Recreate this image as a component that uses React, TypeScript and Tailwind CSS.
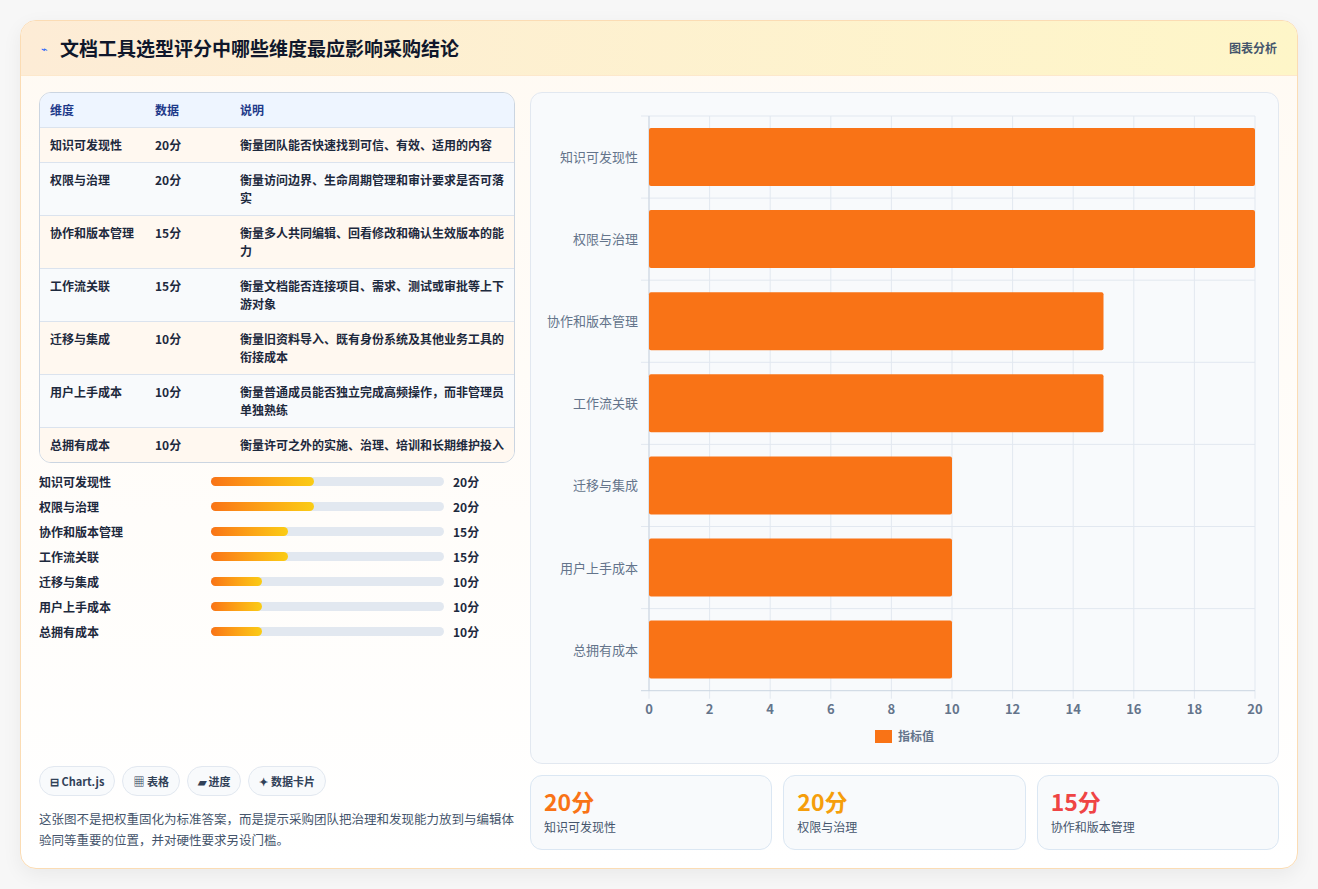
const rows = [
  { name: '知识可发现性', v: 20, desc: '衡量团队能否快速找到可信、有效、适用的内容' },
  { name: '权限与治理', v: 20, desc: '衡量访问边界、生命周期管理和审计要求是否可落实' },
  { name: '协作和版本管理', v: 15, desc: '衡量多人共同编辑、回看修改和确认生效版本的能力' },
  { name: '工作流关联', v: 15, desc: '衡量文档能否连接项目、需求、测试或审批等上下游对象' },
  { name: '迁移与集成', v: 10, desc: '衡量旧资料导入、既有身份系统及其他业务工具的衔接成本' },
  { name: '用户上手成本', v: 10, desc: '衡量普通成员能否独立完成高频操作，而非管理员单独熟练' },
  { name: '总拥有成本', v: 10, desc: '衡量许可之外的实施、治理、培训和长期维护投入' },
];

const font = { fontFamily: '"Noto Sans CJK SC", "Liberation Sans", sans-serif' };

const Chart = () => {
  const x0 = 118;
  const w = 606;
  const top = 23;
  const rh = 82.1;
  const bottom = top + rh * 7;
  return (
    <svg width="747" height="672" className="block">
      {Array.from({ length: 11 }).map((_, i) => (
        <g key={i}>
          <line x1={x0 + (w / 10) * i} x2={x0 + (w / 10) * i} y1={top} y2={bottom + 8} stroke="#e2e8f0" />
          <text x={x0 + (w / 10) * i} y={bottom + 23} textAnchor="middle" fontSize="13" fill="#64748b" fontWeight="600">
            {i * 2}
          </text>
        </g>
      ))}
      {Array.from({ length: 8 }).map((_, i) => (
        <line key={i} x1={x0 - 8} x2={x0 + w} y1={top + rh * i} y2={top + rh * i} stroke={i === 7 ? '#cbd5e1' : '#e2e8f0'} />
      ))}
      <line x1={x0} x2={x0} y1={top} y2={bottom} stroke="#cbd5e1" />
      {rows.map((r, i) => (
        <g key={r.name}>
          <rect x={x0} y={top + rh * i + 12} width={(w * r.v) / 20} height={58} rx="2" fill="#f97316" />
          <text x={x0 - 11} y={top + rh * i + 46} textAnchor="end" fontSize="13" fill="#64748b">
            {r.name}
          </text>
        </g>
      ))}
      <rect x="344" y="637" width="17" height="13" fill="#f97316" />
      <text x="367" y="648" fontSize="12" fill="#64748b" fontWeight="600">指标值</text>
    </svg>
  );
};

const App = () => {
  return (
    <div className="min-h-screen bg-[#f7f7f7] p-5" style={font}>
      <div className="overflow-hidden rounded-2xl border border-[#fbdcb4] bg-gradient-to-b from-[#fffaf3] to-white shadow-[0_6px_20px_rgba(0,0,0,0.06)]">
        <div className="flex h-[55px] items-center justify-between border-b border-[#fde8cc] bg-gradient-to-r from-[#fdecd6] to-[#fef6c8] pl-5 pr-5">
          <div className="flex items-center gap-3">
            <span className="text-[11px] text-blue-600">⌁</span>
            <h1 className="text-[19px] font-bold text-slate-900">文档工具选型评分中哪些维度最应影响采购结论</h1>
          </div>
          <span className="text-xs font-semibold text-slate-600">图表分析</span>
        </div>
        <div className="flex gap-[15px] px-[18px] pt-4 pb-[18px]">
          <div className="flex w-[478px] flex-col">
            <div className="overflow-hidden rounded-xl border border-[#cbd5e1]">
              <table className="w-full text-[12px] font-semibold text-slate-800">
                <thead>
                  <tr className="h-[34px] bg-[#eef5ff] text-left text-[#1e3a8a]">
                    <th className="w-[115px] pl-[10px] font-semibold">维度</th>
                    <th className="w-[85px] font-semibold">数据</th>
                    <th className="font-semibold">说明</th>
                  </tr>
                </thead>
                <tbody>
                  {rows.map((r, i) => (
                    <tr key={r.name} className={`border-t border-[#dbe3ee] align-top ${i % 2 ? 'bg-[#f8fafc]' : 'bg-[#fff8f0]'}`}>
                      <td className="pl-[10px] py-[8px] leading-[18px]">{r.name}</td>
                      <td className="py-[8px] leading-[18px]">{r.v}分</td>
                      <td className="py-[8px] pr-2 leading-[18px]">{r.desc}</td>
                    </tr>
                  ))}
                </tbody>
              </table>
            </div>
            <div className="mt-[10px] flex flex-col gap-[7px]">
              {rows.map((r) => (
                <div key={r.name} className="flex h-[18px] items-center text-[12px] font-semibold text-slate-800">
                  <span className="w-[172px]">{r.name}</span>
                  <div className="h-[9px] w-[233px] rounded-full bg-[#e2e8f0]">
                    <div className="h-full rounded-full bg-gradient-to-r from-[#f97316] to-[#facc15]" style={{ width: `${(r.v / 20) * 44}%` }} />
                  </div>
                  <span className="ml-[9px]">{r.v}分</span>
                </div>
              ))}
            </div>
            <div className="mt-auto flex gap-[7px]">
              {['⊟ Chart.js', '▦ 表格', '▰ 进度', '✦ 数据卡片'].map((t) => (
                <span key={t} className="rounded-full border border-[#e2e8f0] bg-[#f8fafc] px-[10px] py-[6px] text-[11px] font-bold text-slate-700">
                  {t}
                </span>
              ))}
            </div>
            <p className="mt-[12px] text-[12.5px] leading-[21px] text-slate-600">
              这张图不是把权重固化为标准答案，而是提示采购团队把治理和发现能力放到与编辑体验同等重要的位置，并对硬性要求另设门槛。
            </p>
          </div>
          <div className="flex flex-1 flex-col gap-[11px]">
            <div className="h-[672px] rounded-xl border border-[#e2e8f0] bg-[#f8fafc]">
              <Chart />
            </div>
            <div className="grid grid-cols-3 gap-[11px]">
              {[
                { v: '20分', l: '知识可发现性', c: 'text-[#f97316]' },
                { v: '20分', l: '权限与治理', c: 'text-[#f59e0b]' },
                { v: '15分', l: '协作和版本管理', c: 'text-[#ef4444]' },
              ].map((s) => (
                <div key={s.l} className="h-[75px] rounded-xl border border-[#dbe7f3] bg-[#f8fafc] px-[13px] pt-[10px]">
                  <div className={`text-[23px] font-bold leading-[30px] ${s.c}`}>{s.v}</div>
                  <div className="mt-[2px] text-[12px] text-slate-600">{s.l}</div>
                </div>
              ))}
            </div>
          </div>
        </div>
      </div>
    </div>
  );
};

export default App;
